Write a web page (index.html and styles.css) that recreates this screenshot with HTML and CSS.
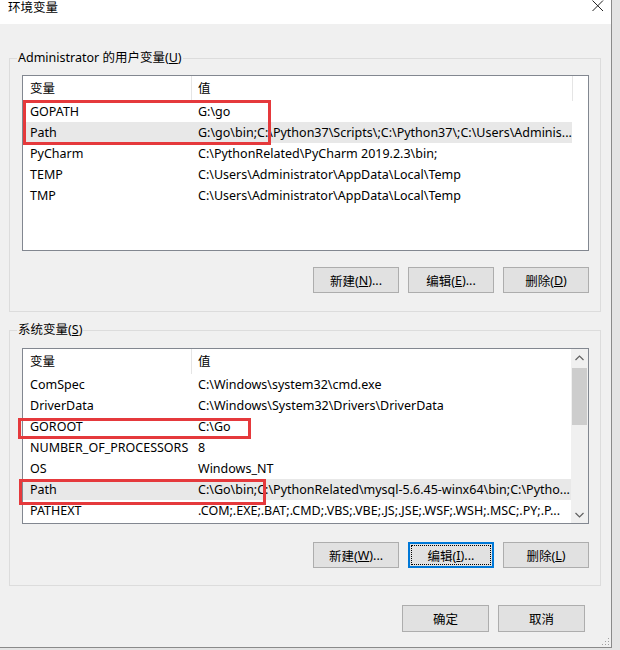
FILE: index.html
```html
<!DOCTYPE html>
<html lang="zh-CN">
<head>
<meta charset="utf-8">
<title>环境变量</title>
<link rel="stylesheet" href="styles.css">
</head>
<body>
<div class="window">
  <div class="titlebar">
    <span class="title">环境变量</span>
    <svg class="close" width="12" height="12" viewBox="0 0 12 12"><path d="M0.5 0.5 L11 11 M11 0.5 L0.5 11" stroke="#222" stroke-width="1" fill="none"/></svg>
  </div>
  <div class="content">
    <fieldset class="group">
      <legend>Administrator 的用户变量(<u>U</u>)</legend>
      <div class="list">
        <div class="rows">
          <div class="row head"><div class="c1">变量</div><div class="c2">值</div></div>
          <div class="row"><div class="c1">GOPATH</div><div class="c2">G:\go</div></div>
          <div class="row sel"><div class="c1">Path</div><div class="c2">G:\go\bin;C:\Python37\Scripts\;C:\Python37\;C:\Users\Adminis...</div></div>
          <div class="row"><div class="c1">PyCharm</div><div class="c2">C:\PythonRelated\PyCharm 2019.2.3\bin;</div></div>
          <div class="row"><div class="c1">TEMP</div><div class="c2">C:\Users\Administrator\AppData\Local\Temp</div></div>
          <div class="row"><div class="c1">TMP</div><div class="c2">C:\Users\Administrator\AppData\Local\Temp</div></div>
        </div>
        <div class="gutter"><div class="gutter-head"></div></div>
      </div>
      <div class="btns">
        <div class="btn">新建(<u>N</u>)...</div>
        <div class="btn">编辑(<u>E</u>)...</div>
        <div class="btn">删除(<u>D</u>)</div>
      </div>
    </fieldset>

    <fieldset class="group group-sys">
      <legend>系统变量(<u>S</u>)</legend>
      <div class="list">
        <div class="rows">
          <div class="row head"><div class="c1">变量</div><div class="c2">值</div></div>
          <div class="row"><div class="c1">ComSpec</div><div class="c2">C:\Windows\system32\cmd.exe</div></div>
          <div class="row"><div class="c1">DriverData</div><div class="c2">C:\Windows\System32\Drivers\DriverData</div></div>
          <div class="row"><div class="c1">GOROOT</div><div class="c2">C:\Go</div></div>
          <div class="row"><div class="c1">NUMBER_OF_PROCESSORS</div><div class="c2">8</div></div>
          <div class="row"><div class="c1">OS</div><div class="c2">Windows_NT</div></div>
          <div class="row sel"><div class="c1">Path</div><div class="c2">C:\Go\bin;C:\PythonRelated\mysql-5.6.45-winx64\bin;C:\Pytho...</div></div>
          <div class="row"><div class="c1">PATHEXT</div><div class="c2">.COM;.EXE;.BAT;.CMD;.VBS;.VBE;.JS;.JSE;.WSF;.WSH;.MSC;.PY;.P...</div></div>
        </div>
        <div class="scrollbar">
          <div class="sb-arrow"><svg width="9" height="6" viewBox="0 0 9 6"><path d="M0.5 5 L4.5 1 L8.5 5" stroke="#606060" stroke-width="1.2" fill="none"/></svg></div>
          <div class="sb-track"><div class="sb-thumb"></div></div>
          <div class="sb-arrow"><svg width="9" height="6" viewBox="0 0 9 6"><path d="M0.5 1 L4.5 5 L8.5 1" stroke="#606060" stroke-width="1.2" fill="none"/></svg></div>
        </div>
      </div>
      <div class="btns btns-sys">
        <div class="btn">新建(<u>W</u>)...</div>
        <div class="btn focused">编辑(<u>I</u>)...</div>
        <div class="btn">删除(<u>L</u>)</div>
      </div>
    </fieldset>

    <div class="footer">
      <div class="btn btn-wide">确定</div>
      <div class="btn btn-wide">取消</div>
    </div>
  </div>

  <div class="mark mark-1"></div>
  <div class="mark mark-2"></div>
  <div class="mark mark-3"></div>

  <svg class="grip" width="10" height="10" viewBox="0 0 10 10">
    <rect x="8" y="2" width="1" height="1" fill="#a0a0a0"/>
    <rect x="5" y="5" width="1" height="1" fill="#a0a0a0"/>
    <rect x="8" y="5" width="1" height="1" fill="#a0a0a0"/>
    <rect x="2" y="8" width="1" height="1" fill="#a0a0a0"/>
    <rect x="5" y="8" width="1" height="1" fill="#a0a0a0"/>
    <rect x="8" y="8" width="1" height="1" fill="#a0a0a0"/>
  </svg>
</div>
</body>
</html>
```
FILE: styles.css
```css
* { box-sizing: border-box; }
html, body { margin: 0; padding: 0; }
body {
  background: #e4e4e4;
  font-family: "Noto Sans", "Noto Sans CJK SC", sans-serif;
  font-size: 12.5px;
  color: #000;
  width: 620px;
  height: 650px;
  overflow: hidden;
}
.window {
  position: relative;
  width: 612px;
  height: 648px;
  background: #f0f0f0;
  border-right: 1px solid #8a8a8a;
  border-bottom: 1px solid #8a8a8a;
  display: flex;
  flex-direction: column;
}
.titlebar {
  height: 24px;
  background: #fff;
  display: flex;
  justify-content: space-between;
  align-items: flex-start;
  padding: 0 7px 0 8px;
}
.title { line-height: 16px; font-size: 12.5px; }
.close { margin-top: 0; }

.content {
  padding: 26px 10px 0 9px;
  display: flex;
  flex-direction: column;
}
.group {
  margin: 0;
  border: 1px solid #dcdcdc;
  padding: 9px 11px 18px 12px;
  min-width: 0;
}
.group legend {
  padding: 0 1px;
  margin-left: -5px;
  line-height: 16px;
}
.group-sys { margin-top: 10px; padding-top: 10px; padding-bottom: 17px; }

.list {
  height: 176px;
  background: #fff;
  border: 1px solid #828790;
  display: flex;
  overflow: hidden;
}
.rows { flex: 0 0 548px; }
.row {
  display: flex;
  height: 21px;
  line-height: 21px;
  white-space: nowrap;
}
.row.head { height: 25px; line-height: 25px; }
.row .c1 { flex: 0 0 169px; padding-left: 7px; overflow: hidden; }
.row .c2 { flex: 1 1 auto; padding-left: 6px; overflow: hidden; }
.row.head .c1 { border-right: 1px solid #e5e5e5; }
.row.sel { background: #e8e8e8; }
.gutter { flex: 1 1 auto; }
.gutter-head { height: 25px; border-left: 1px solid #e5e5e5; }

.scrollbar {
  flex: 0 0 17px;
  background: #f0f0f0;
  display: flex;
  flex-direction: column;
}
.sb-arrow {
  height: 17px;
  display: flex;
  align-items: center;
  justify-content: center;
}
.sb-track { flex: 1 1 auto; padding: 2px 1px; }
.sb-thumb { height: 57px; background: #cdcdcd; }

.btns {
  display: flex;
  justify-content: flex-end;
  gap: 9px;
  margin-top: 16px;
}
.btns-sys { margin-top: 18px; }
.btn {
  position: relative;
  width: 86px;
  height: 26px;
  background: #e1e1e1;
  border: 1px solid #adadad;
  display: flex;
  align-items: center;
  justify-content: center;
  white-space: nowrap;
}
.btn.focused {
  border: 2px solid #0078d7;
}
.btn.focused::after {
  content: "";
  position: absolute;
  left: 1px; top: 1px; right: 1px; bottom: 1px;
  border: 1px dotted #000;
}
.footer {
  display: flex;
  justify-content: flex-end;
  gap: 9px;
  margin-top: 19px;
  padding-right: 16px;
}
.btn-wide { width: 87px; height: 27px; }

.mark {
  position: absolute;
  border: 3px solid #e5393c;
}
.mark-1 { left: 23px; top: 100px; width: 248px; height: 45px; }
.mark-2 { left: 18px; top: 418px; width: 233px; height: 21px; }
.mark-3 { left: 19px; top: 479px; width: 247px; height: 26px; }

.grip { position: absolute; right: 1px; bottom: 1px; }
```
